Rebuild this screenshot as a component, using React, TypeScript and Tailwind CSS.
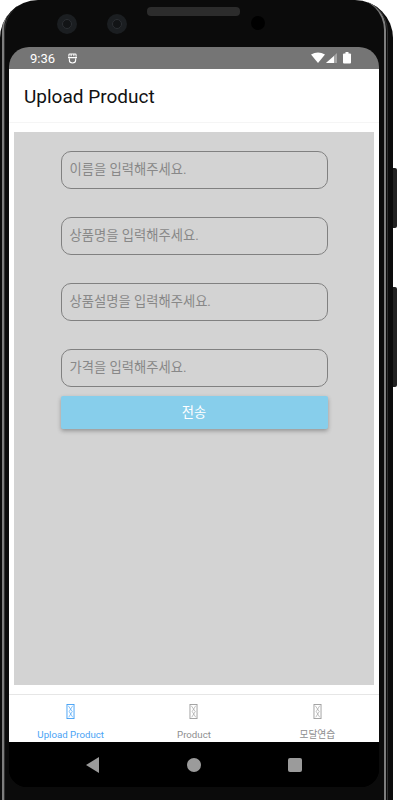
const FONT = 'font-["Roboto","Noto_Sans_CJK_KR",sans-serif]';

const fields = [
  '이름을 입력해주세요.',
  '상품명을 입력해주세요.',
  '상품설명을 입력해주세요.',
  '가격을 입력해주세요.',
];

function MissingGlyph({ color }: { color: string }) {
  return (
    <svg width="9" height="17" viewBox="0 0 9 17" fill="none" stroke={color} strokeWidth="1">
      <rect x="0.5" y="0.5" width="8" height="16" />
      <path d="M2 2 L6.5 8.5 L2.5 15 M7 2 L3 8.5 L7 15" strokeWidth="0.7" />
    </svg>
  );
}

function Tab({ label, color, active }: { label: string; color: string; active?: boolean }) {
  return (
    <div className="flex-1 flex flex-col items-center pt-[9px]">
      <MissingGlyph color={color} />
      <span className={`mt-[9px] text-[9.7px] leading-[14px] whitespace-nowrap ${active ? 'text-[#4aa3f5]' : 'text-[#8e8e8f]'}`}>
        {label}
      </span>
    </div>
  );
}

function Lens({ className }: { className: string }) {
  return (
    <div className={`absolute w-[20px] h-[20px] rounded-full bg-[#1b1e21] flex items-center justify-center ${className}`}>
      <div className="w-[10px] h-[10px] rounded-full bg-[#121416] border border-[#2c2f33]" />
    </div>
  );
}

export default function App() {
  return (
    <div className={`relative w-[400px] h-[800px] overflow-hidden bg-white ${FONT}`}>
      {/* side buttons */}
      <div className="absolute left-[393px] top-[168px] w-[4px] h-[60px] rounded-r-[2px] bg-[#222]" />
      <div className="absolute left-[393px] top-[287px] w-[4px] h-[100px] rounded-r-[2px] bg-[#222]" />

      {/* phone body */}
      <div className="relative w-[393px] h-[820px] rounded-t-[38px] bg-[#0b0b0b] overflow-hidden">
        {/* metal rings */}
        <div className="absolute left-[2px] top-[-4px] w-[384px] h-[830px] rounded-t-[34px] border-x-[2px] border-t-[2px] border-[#7d7d7d]" />
        <div className="absolute left-[4px] top-[-2px] w-[384px] h-[830px] rounded-t-[34px] border-x-[1px] border-t-[1px] border-[#303030]" />

        {/* camera row */}
        <Lens className="left-[57px] top-[14px]" />
        <Lens className="left-[107px] top-[14px]" />
        <div className="absolute left-[147px] top-[7px] w-[93px] h-[9px] rounded-[4px] bg-[#2c2c2c]" />
        <div className="absolute left-[251px] top-[16px] w-[14px] h-[14px] rounded-full bg-black" />

        {/* screen */}
        <div className="absolute left-[9px] top-[47px] w-[370px] h-[740px] flex flex-col overflow-hidden rounded-t-[20px] rounded-b-[18px] bg-black">
          <div className="h-[22px] shrink-0 bg-[#757575] flex items-center px-[21px] text-white">
            <span className="text-[13px] leading-none">9:36</span>
            <svg className="ml-[13px]" width="9" height="11" viewBox="0 0 10 12" fill="none" stroke="#fff" strokeWidth="1.2">
              <path d="M1 4 V2 Q1 1 2 1 H8 Q9 1 9 2 V4 M0 5 H10 M3.5 1 V3.5 M6.5 1 V3.5 M1.5 6 V8 Q1.5 11 5 11 Q8.5 11 8.5 8 V6" />
            </svg>
            <svg className="ml-auto mr-[5px]" width="42" height="12" viewBox="0 0 42 12" fill="#fff">
              <path d="M0 2.5 Q7 -1.5 14 2.5 L7 11 Z" />
              <path d="M26 1 V11 H15 Z" fillOpacity="0.35" />
              <path d="M23 4 V11 H15 Z" />
              <rect x="32" y="1.5" width="8" height="10" rx="1" />
              <rect x="34.5" y="0" width="3" height="2" />
            </svg>
          </div>

          <div className="h-[54px] shrink-0 bg-white border-b border-[#f5f5f5] flex items-center px-[15px] pt-[4px]">
            <span className="text-[19px] font-normal text-[#111]">Upload Product</span>
          </div>

          <div className="flex-1 bg-white px-[5px] py-[9px] border-b border-[#e6e6e6] min-h-0">
            <div className="h-full bg-[#d3d3d3] flex flex-col items-center pt-[19px]">
              <div className="flex flex-col gap-[28px]">
                {fields.map((placeholder) => (
                  <div
                    key={placeholder}
                    className="w-[267px] h-[38px] rounded-[10px] border border-[#808080] flex items-center px-[8px] text-[13.3px] text-[#888]"
                  >
                    {placeholder}
                  </div>
                ))}
              </div>
              <div className="mt-[9px] w-[267px] h-[33px] shrink-0 rounded-[2px] bg-[#87ceeb] shadow-[0_2px_4px_rgba(0,0,0,0.3)] flex items-center justify-center text-[13.3px] text-white">
                전송
              </div>
            </div>
          </div>

          <div className="h-[47px] shrink-0 bg-white flex overflow-hidden">
            <Tab label="Upload Product" color="#3b9cf5" active />
            <Tab label="Product" color="#9a9a9a" />
            <Tab label="모달연습" color="#9a9a9a" />
          </div>

          {/* android nav */}
          <div className="h-[45px] shrink-0 bg-black flex items-center justify-between pl-[77px] pr-[77px]">
            <svg width="14" height="16" viewBox="0 0 14 16" fill="#9b9b9b">
              <path d="M0 8 L13 0 V16 Z" />
            </svg>
            <div className="w-[14px] h-[14px] rounded-full bg-[#9b9b9b]" />
            <div className="w-[14px] h-[14px] rounded-[2px] bg-[#9b9b9b]" />
          </div>
        </div>
      </div>
    </div>
  );
}
